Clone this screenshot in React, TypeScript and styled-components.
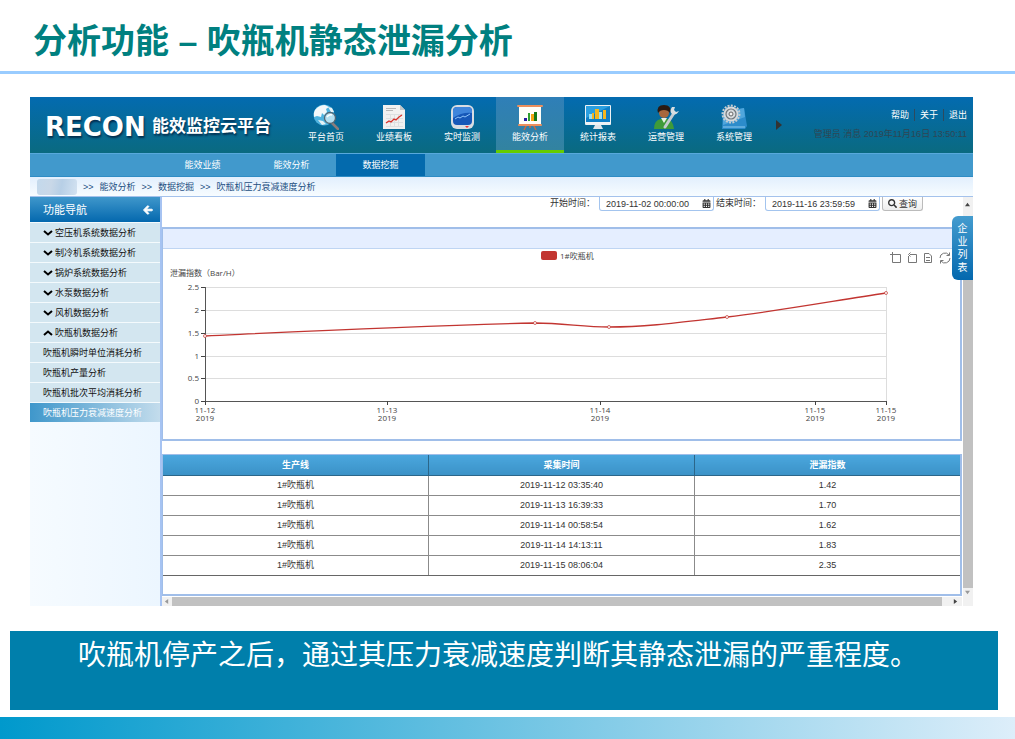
import React from "react";
import styled, { createGlobalStyle } from "styled-components";
import { FaArrowLeft, FaCalendarAlt, FaSearch } from "react-icons/fa";

const GlobalStyle = createGlobalStyle`
  * { box-sizing: border-box; }
  body {
    margin: 0;
    background: #fff;
    color: #333;
    font-family: "Liberation Sans", "Noto Sans CJK SC", sans-serif;
  }
  button, input { font: inherit; color: inherit; }
  a { color: inherit; text-decoration: none; }
  ul { list-style: none; margin: 0; padding: 0; }
`;

const Slide = styled.div`
  display: flex;
  flex-direction: column;
`;

const SlideTitle = styled.h1`
  margin: 0;
  padding: 11px 33px 0;
  height: 74px;
  border-bottom: 3px solid #99ccff;
  color: #008080;
  font-size: 34px;
  line-height: 60px;
  font-weight: 700;
  white-space: nowrap;
`;

const AppFrame = styled.section`
  position: relative;
  margin: 23px 42px 0 30px;
  font-size: 9px;
  line-height: 12px;
`;

const Header = styled.header`
  display: flex;
  height: 56px;
  background: linear-gradient(#036bb0, #0a6a80);
  color: #fff;
`;

const Brand = styled.div`
  display: flex;
  align-items: center;
  flex: 0 0 262px;
  padding: 3px 0 0 15px;
  white-space: nowrap;
  text-shadow: 1px 2px 2px rgba(0, 20, 50, 0.7);
`;

const Wordmark = styled.span`
  flex: 0 0 107px;
  font-family: "DejaVu Sans", sans-serif;
  font-size: 26px;
  line-height: 28px;
  font-weight: 700;
`;

const BrandName = styled.span`
  font-size: 17px;
  line-height: 28px;
  font-weight: 700;
`;

const MainNav = styled.nav`
  display: flex;
  align-items: center;
`;

const NavItem = styled.a<{ $active?: boolean }>`
  display: flex;
  flex-direction: column;
  align-items: center;
  gap: 1px;
  width: 68px;
  height: 56px;
  padding-top: 7px;
  background: ${(p) => (p.$active ? "linear-gradient(#2f7fb8, #3283a0)" : "none")};
  border-bottom: 3px solid ${(p) => (p.$active ? "#66cc00" : "transparent")};
  background-clip: padding-box;
`;

const MoreButton = styled.button`
  margin-left: 4px;
  padding: 0;
  border: 0;
  background: none;
  line-height: 0;
`;

const Account = styled.div`
  margin-left: auto;
  padding: 12px 6px 0 0;
  text-align: right;
  white-space: nowrap;
`;

const AccountLinks = styled.div`
  display: flex;
  justify-content: flex-end;
  a + a {
    margin-left: 5px;
    padding-left: 5px;
    border-left: 1px solid #2d4a5e;
  }
`;

const AccountInfo = styled.p`
  margin: 7px 0 0;
  color: #2f4654;
`;

const SubNav = styled.nav`
  display: flex;
  height: 24px;
  padding-left: 128px;
  background: #4199cc;
  border-top: 1px solid #58a9dc;
  border-bottom: 1px solid #2f8cc4;
  color: #fff;
`;

const SubNavItem = styled.a<{ $active?: boolean }>`
  width: 89px;
  line-height: 22px;
  text-align: center;
  background: ${(p) => (p.$active ? "#036aad" : "none")};
`;

const Breadcrumb = styled.nav`
  display: flex;
  align-items: center;
  gap: 6px;
  height: 20px;
  padding-left: 7px;
  background: linear-gradient(#e2effd, #f7fcff);
  border-bottom: 1px solid #a4c2ec;
  color: #1c4f82;
`;

const Redacted = styled.span`
  width: 40px;
  height: 16px;
  border-radius: 3px;
  background: linear-gradient(100deg, #c3d9ec, #c9d8e8 35%, #b7cfe6 60%, #d3e2f1);
`;

const Body = styled.div`
  display: grid;
  grid-template-columns: 130px 1fr;
`;

const Sidebar = styled.aside`
  background: linear-gradient(90deg, #f6fbff, #ecf6ff);
  color: #111;
`;

const SidebarHead = styled.h2`
  display: flex;
  align-items: center;
  justify-content: space-between;
  height: 25px;
  margin: 0;
  padding: 0 7px 0 13px;
  background: linear-gradient(#3f97cb, #0468ae);
  color: #fff;
  font-size: 11px;
  line-height: 14px;
  font-weight: 400;
`;

const SideLink = styled.a<{ $active?: boolean }>`
  display: flex;
  align-items: center;
  gap: 2px;
  height: 20px;
  padding-left: 13px;
  border-top: 1px solid #f4fafd;
  background: ${(p) =>
    p.$active ? "linear-gradient(90deg, #3f97cb, #c3dcec)" : "#d3e6f0"};
  color: ${(p) => (p.$active ? "#fff" : "inherit")};
  white-space: nowrap;
`;

const Main = styled.main`
  display: grid;
  grid-template-columns: 1fr 11px;
  border-left: 2px solid #a6c3f2;
`;

const QueryForm = styled.form`
  display: flex;
  justify-content: flex-end;
  align-items: flex-start;
  height: 30px;
  padding-right: 39px;
  white-space: nowrap;
`;

const DateLabel = styled.label`
  width: 49px;
`;

const DateField = styled.div`
  display: flex;
  align-items: center;
  width: 115px;
  height: 14px;
  margin-right: 2px;
  padding: 0 2px 0 6px;
  border: 1px solid #a3c4ee;
  border-top: 0;
  border-radius: 0 0 3px 3px;
  color: #333;
  input {
    flex: 1;
    min-width: 0;
    padding: 0;
    border: 0;
    background: none;
    outline: 0;
  }
`;

const QueryButton = styled.button`
  display: flex;
  align-items: center;
  gap: 2px;
  height: 14px;
  padding: 0 5px;
  border: 1px solid #bbb;
  border-top: 0;
  border-radius: 0 0 3px 3px;
  background: linear-gradient(#fff, #eee);
`;

const Panel = styled.section`
  border: 2px solid #a0bee9;
  border-left-width: 1px;
`;

const PanelBar = styled.div`
  height: 20px;
  background: #e5eeff;
  border-bottom: 1px solid #bfd5f3;
`;

const ChartSvg = styled.svg`
  display: block;
  width: 100%;
  height: auto;
  font-family: "Open Sans", "Noto Sans CJK SC", sans-serif;
  font-size: 8px;
  fill: #444;
`;

const TablePanel = styled(Panel)`
  margin-top: 13px;
  padding-bottom: 18px;
  border-top-width: 1px;
`;

const DataTable = styled.table`
  width: 100%;
  table-layout: fixed;
  border-collapse: collapse;
  text-align: center;
  th, td {
    height: 20px;
    padding: 0;
    border-bottom: 1px solid #8b8b8b;
  }
  th + th, td + td { border-left: 1px solid #8b8b8b; }
  th {
    background: linear-gradient(#4ba7de, #3b92c7);
    color: #fff;
    border-color: #2b6689;
  }
  th + th { border-left-color: #2b6689; }
  tr:last-child td { border-bottom-color: #666; }
`;

const VerticalScroll = styled.div`
  display: flex;
  flex-direction: column;
  background: #c1c1c1;
  border-left: 1px solid #fff;
`;

const HorizontalScroll = styled.div`
  display: flex;
  height: 9px;
  margin-top: 1px;
  background: #c1c1c1;
`;

const ScrollArrow = styled.span<{ $wide?: boolean }>`
  display: flex;
  align-items: center;
  justify-content: flex-end;
  flex: none;
  min-height: 9px;
  width: ${(p) => (p.$wide ? "20px" : "10px")};
  padding-right: ${(p) => (p.$wide ? "4px" : "3px")};
  background: #f1f1f1;
`;

const TrackEnd = styled(ScrollArrow)`
  height: 30px;
  align-items: flex-start;
  padding-top: 5px;
`;

const Spacer = styled.span`
  flex: 1;
`;

const CompanyTab = styled.button`
  position: absolute;
  top: 119px;
  right: 0;
  width: 21px;
  height: 64px;
  padding: 0 5px;
  border: 0;
  border-radius: 6px 0 0 6px;
  background: linear-gradient(#449ccf, #0468ae);
  color: #fff;
  font-size: 10px;
  line-height: 13px;
`;

const Caption = styled.p`
  margin: 25px 17px 0 10px;
  height: 79px;
  padding-right: 12px;
  background: #007fab;
  color: #fff;
  font-family: "Noto Sans CJK SC", sans-serif;
  font-size: 28px;
  line-height: 44px;
  text-align: center;
`;

const FooterBar = styled.div`
  height: 22px;
  margin-top: 7px;
  background: linear-gradient(90deg, #0099cc, #ddeefa);
`;

const GlobeIcon = () => (
  <svg width="26" height="26" viewBox="0 0 26 26">
    <circle cx="11" cy="11" r="10.500" fill="#4fb3df" />
    <path d="M2 6 Q6 1 12 1 L16 3 L13 5 L14 8 L11 11 L9 9 L8 13 L4 12 L1 13 Q0 9 2 6Z" fill="#f3f8fa" />
    <path d="M15 3 L19 4 L21 8 L18 8Z M5 16 L10 17 L13 20 L9 21Z" fill="#e5f1f5" />
    <path d="M19 19 L25 25" stroke="#8b7d7c" strokeWidth="2.500" strokeLinecap="round" />
    <circle cx="17" cy="14" r="5.500" fill="#b4dff0" stroke="#526673" strokeWidth="1.300" />
    <path d="M14 13 Q16 10 19 11" stroke="#fff" fill="none" strokeWidth="1.500" />
  </svg>
);

const ReportIcon = () => (
  <svg width="26" height="26" viewBox="0 0 26 26">
    <path d="M2 1 H19 L24 6 V25 H2Z" fill="#f1f1f0" />
    <path d="M19 1 V6 H24Z" fill="#c2c7c9" />
    <path d="M5 4.500 H15 M5 6.500 H12" stroke="#b8b8b8" />
    <path d="M5 10.500 H22 M5 14.500 H22 M5 18.500 H22 M5 22.500 H22 M9.500 10 V23 M13.500 10 V23 M17.500 10 V23" stroke="#dde0e1" />
    <path d="M5 19 L8 17 L10 18 L13 15 L15 16 L18 13 L21 11" stroke="#d8322b" strokeWidth="1.300" fill="none" />
  </svg>
);

const MonitorIcon = () => (
  <svg width="26" height="26" viewBox="0 0 26 26">
    <rect x="2" y="1" width="23" height="24" rx="6" fill="#d9dde2" />
    <rect x="4" y="3" width="19" height="18" rx="4" fill="#1658b8" />
    <path d="M4 10 V7 Q4 3 8 3 H19 Q23 3 23 7 V9 Q13 8 4 14Z" fill="#3f86dc" />
    <path d="M6 15 L9 13 L11 14 L14 12 L16 13 L21 10" stroke="#8fc5fb" fill="none" />
    <path d="M16 22 H20 L18 24Z" fill="#e33" />
  </svg>
);

const BoardIcon = () => (
  <svg width="28" height="26" viewBox="0 0 28 26">
    <path d="M11 20 L8 26 M17 20 L20 26 M14 20 V24" stroke="#c96a42" strokeWidth="1.500" />
    <rect x="3" y="2" width="22" height="19" fill="#fffef8" />
    <rect x="1" y="1" width="26" height="2" rx="1" fill="#ec8f5c" />
    <rect x="2" y="20" width="24" height="2" rx="1" fill="#ec8f5c" />
    <rect x="8" y="14" width="3" height="3" fill="#2a1d9e" />
    <rect x="12" y="9" width="2" height="8" fill="#2f9e2f" />
    <rect x="15" y="10" width="3" height="7" fill="#f2a413" />
    <rect x="18" y="8" width="3" height="9" fill="#157a15" />
  </svg>
);

const StatsIcon = () => (
  <svg width="28" height="26" viewBox="0 0 28 26">
    <rect x="1" y="1" width="26" height="20" rx="1" fill="#eef2f5" />
    <rect x="2" y="2" width="24" height="16" fill="#0f7fc7" />
    <path d="M2 2 H26 L2 14Z" fill="#2b9fe0" />
    <path d="M5 15 V10 H8 V15Z M15 15 V8 H18 V15Z" fill="#9be0f2" />
    <path d="M11 15 V5 H15 V15Z M19 15 V6 H22 V15Z M8 15 V9 H10 V15Z" fill="#f4b61f" />
    <path d="M11 21 H17 L19 25 H9Z" fill="#dfe5ea" />
  </svg>
);

const OperatorIcon = () => (
  <svg width="28" height="26" viewBox="0 0 28 26">
    <path d="M2 25 Q2 16 9 15 H15 Q21 16 22 25Z" fill="#3f9b3a" />
    <path d="M9 14 H15 L12 19Z" fill="#e9f2e5" />
    <circle cx="12" cy="9" r="5" fill="#a8673c" />
    <path d="M6 9 Q4 1 12 1 Q20 1 18 9 Q16 6 12 6 Q8 6 6 9Z" fill="#2b1a12" />
    <path d="M13 23 L22 9" stroke="#c4cbd1" strokeWidth="3" strokeLinecap="round" />
    <path d="M20 3 Q17 7 20 10 Q24 12 27 7 L24 8 L22 6 L23 3Z" fill="#d7dde1" />
  </svg>
);

const SettingsIcon = () => (
  <svg width="26" height="26" viewBox="0 0 26 26">
    <path d="M2 8 L23 4 L26 22 L24 25 H1Z" fill="#2c8ccb" />
    <path d="M2 8 L23 4 L24 13 L2 21Z" fill="#4fa6dc" />
    <path d="M2 23 H24" stroke="#8fcbee" />
    <circle cx="10" cy="10" r="8.500" fill="none" stroke="#c5cbcf" strokeWidth="2" strokeDasharray="2 1.300" />
    <circle cx="10" cy="10" r="7.500" fill="#d6dadd" />
    <circle cx="10" cy="10" r="5" fill="none" stroke="#6f787e" strokeWidth="1.200" />
    <circle cx="10" cy="10" r="2" fill="#f2f2f2" stroke="#666" />
  </svg>
);

const Chevron = ({ up }: { up?: boolean }) => (
  <svg width="10" height="8" viewBox="0 0 10 8">
    <path d={up ? "M1 6 L5 2.500 L9 6" : "M1 2 L5 5.500 L9 2"} stroke="#000" strokeWidth="2" fill="none" />
  </svg>
);

const Triangle = ({ d, color = "#444" }: { d: string; color?: string }) => (
  <svg width="5" height="5" viewBox="0 0 6 6">
    <path d={d} fill={color} />
  </svg>
);

const modules = [
  { label: "平台首页", Icon: GlobeIcon },
  { label: "业绩看板", Icon: ReportIcon },
  { label: "实时监测", Icon: MonitorIcon },
  { label: "能效分析", Icon: BoardIcon, active: true },
  { label: "统计报表", Icon: StatsIcon },
  { label: "运营管理", Icon: OperatorIcon },
  { label: "系统管理", Icon: SettingsIcon },
];

const groups = ["空压机系统数据分析", "制冷机系统数据分析", "锅炉系统数据分析", "水泵数据分析", "风机数据分析", "吹瓶机数据分析"];
const pages = ["吹瓶机瞬时单位消耗分析", "吹瓶机产量分析", "吹瓶机批次平均消耗分析", "吹瓶机压力衰减速度分析"];

const rows = [
  ["1#吹瓶机", "2019-11-12 03:35:40", "1.42"],
  ["1#吹瓶机", "2019-11-13 16:39:33", "1.70"],
  ["1#吹瓶机", "2019-11-14 00:58:54", "1.62"],
  ["1#吹瓶机", "2019-11-14 14:13:11", "1.83"],
  ["1#吹瓶机", "2019-11-15 08:06:04", "2.35"],
];

const yTicks = [
  { y: 38, label: "2.5" },
  { y: 61, label: "2" },
  { y: 84, label: "1.5" },
  { y: 107, label: "1" },
  { y: 129, label: "0.5" },
  { y: 152, label: "0" },
];
const xTicks = [
  { x: 42, label: "11-12" },
  { x: 224, label: "11-13" },
  { x: 437, label: "11-14" },
  { x: 652, label: "11-15" },
  { x: 723, label: "11-15" },
];
const points = [[42, 87], [372, 74], [446, 78], [564, 68], [723, 44]];

const Chart = () => (
  <ChartSvg viewBox="0 0 797 190" role="img" aria-label="泄漏指数">
    <rect x="378" y="2" width="16" height="9" rx="2" fill="#c23531" />
    <text x="397" y="10">1#吹瓶机</text>
    <text x="7" y="27">泄漏指数（Bar/H）</text>
    <g fill="none" stroke="#777">
      <path d="M727 5.500 H737.500 V13.500 H729.500 V3" />
      <path d="M747 5.500 H753.500 V13.500 H745.500 V7 M747.500 3.500 L745.500 5.500 L747.500 7.500" />
      <path d="M761.500 4.500 H766 L768.500 7 V13.500 H761.500Z M763 8.500 H767 M763 11.500 H767" />
      <path d="M777 9 A5 5 0 0 1 786 6 M787 9 A5 5 0 0 1 778 12 M786.500 3.500 V6.500 H783.500 M777.500 14.500 V11.500 H780.500" />
    </g>
    {yTicks.map((t) => (
      <g key={t.label}>
        <path d={`M42 ${t.y + 0.5} H723`} stroke="#ddd" />
        <path d={`M38 ${t.y + 0.5} H42`} stroke="#444" />
        <text x="36" y={t.y + 3} textAnchor="end">{t.label}</text>
      </g>
    ))}
    <path d="M723.500 38 V152" stroke="#ddd" />
    <path d="M42.500 38 V156 M42 152.500 H724" stroke="#555" fill="none" />
    {xTicks.map((t) => (
      <g key={t.x}>
        <path d={`M${t.x + 0.5} 152 V156`} stroke="#444" />
        <text y="164" textAnchor="middle">
          <tspan x={t.x}>{t.label}</tspan>
          <tspan x={t.x} dy="8">2019</tspan>
        </text>
      </g>
    ))}
    <path
      d="M42 87 C150 82 250 77 372 74 C400 74 420 78 446 78 C485 78 520 73 564 68 C615 62 670 52 723 44"
      fill="none"
      stroke="#c23531"
      strokeWidth="1.300"
    />
    {points.map(([x, y]) => (
      <circle key={x} cx={x} cy={y} r="1.500" fill="#fff" stroke="#c23531" strokeWidth="0.700" />
    ))}
  </ChartSvg>
);

export default function App() {
  return (
    <Slide>
      <GlobalStyle />
      <SlideTitle>分析功能 – 吹瓶机静态泄漏分析</SlideTitle>

      <AppFrame>
        <Header>
          <Brand>
            <Wordmark>RECON</Wordmark>
            <BrandName>能效监控云平台</BrandName>
          </Brand>
          <MainNav>
            {modules.map(({ label, Icon, active }) => (
              <NavItem key={label} href="#" $active={active}>
                <Icon />
                {label}
              </NavItem>
            ))}
            <MoreButton type="button" aria-label="更多">
              <svg width="14" height="10" viewBox="0 0 14 10">
                <path d="M4 0 L10 5 L4 10Z" fill="#333" />
              </svg>
            </MoreButton>
          </MainNav>
          <Account>
            <AccountLinks>
              <a href="#">帮助</a>
              <a href="#">关于</a>
              <a href="#">退出</a>
            </AccountLinks>
            <AccountInfo>管理员 消息 2019年11月16日 13:50:11</AccountInfo>
          </Account>
        </Header>

        <SubNav>
          <SubNavItem href="#">能效业绩</SubNavItem>
          <SubNavItem href="#">能效分析</SubNavItem>
          <SubNavItem href="#" $active>数据挖掘</SubNavItem>
        </SubNav>

        <Breadcrumb>
          <Redacted />
          <span>&gt;&gt;</span>
          <a href="#">能效分析</a>
          <span>&gt;&gt;</span>
          <a href="#">数据挖掘</a>
          <span>&gt;&gt;</span>
          <a href="#">吹瓶机压力衰减速度分析</a>
        </Breadcrumb>

        <Body>
          <Sidebar>
            <SidebarHead>
              功能导航
              <FaArrowLeft size={10} stroke="#fff" strokeWidth={50} />
            </SidebarHead>
            <ul>
              {groups.map((g, i) => (
                <li key={g}>
                  <SideLink href="#">
                    <Chevron up={i === groups.length - 1} />
                    {g}
                  </SideLink>
                </li>
              ))}
              {pages.map((p, i) => (
                <li key={p}>
                  <SideLink href="#" $active={i === pages.length - 1}>{p}</SideLink>
                </li>
              ))}
            </ul>
          </Sidebar>

          <Main>
            <div>
              <QueryForm>
                <DateLabel htmlFor="start">开始时间：</DateLabel>
                <DateField>
                  <input id="start" defaultValue="2019-11-02 00:00:00" />
                  <FaCalendarAlt size={9} />
                </DateField>
                <DateLabel htmlFor="end">结束时间：</DateLabel>
                <DateField>
                  <input id="end" defaultValue="2019-11-16 23:59:59" />
                  <FaCalendarAlt size={9} />
                </DateField>
                <QueryButton type="button">
                  <FaSearch size={9} />
                  查询
                </QueryButton>
              </QueryForm>
              <Panel>
                <PanelBar />
                <Chart />
              </Panel>
              <TablePanel>
                <DataTable>
                  <thead>
                    <tr>
                      <th>生产线</th>
                      <th>采集时间</th>
                      <th>泄漏指数</th>
                    </tr>
                  </thead>
                  <tbody>
                    {rows.map((r) => (
                      <tr key={r[1]}>
                        {r.map((c) => (
                          <td key={c}>{c}</td>
                        ))}
                      </tr>
                    ))}
                  </tbody>
                </DataTable>
              </TablePanel>
              <HorizontalScroll>
                <ScrollArrow>
                  <Triangle d="M5 0 V6 L1 3Z" color="#999" />
                </ScrollArrow>
                <Spacer />
                <ScrollArrow $wide>
                  <Triangle d="M1 0 V6 L5 3Z" />
                </ScrollArrow>
              </HorizontalScroll>
            </div>
            <VerticalScroll>
              <TrackEnd>
                <Triangle d="M0 5 H6 L3 1Z" />
              </TrackEnd>
              <Spacer />
              <ScrollArrow>
                <Triangle d="M0 1 H6 L3 5Z" color="#999" />
              </ScrollArrow>
              <ScrollArrow />
            </VerticalScroll>
          </Main>
        </Body>
        <CompanyTab type="button">企业列表</CompanyTab>
      </AppFrame>

      <Caption>吹瓶机停产之后，通过其压力衰减速度判断其静态泄漏的严重程度。</Caption>
      <FooterBar />
    </Slide>
  );
}
